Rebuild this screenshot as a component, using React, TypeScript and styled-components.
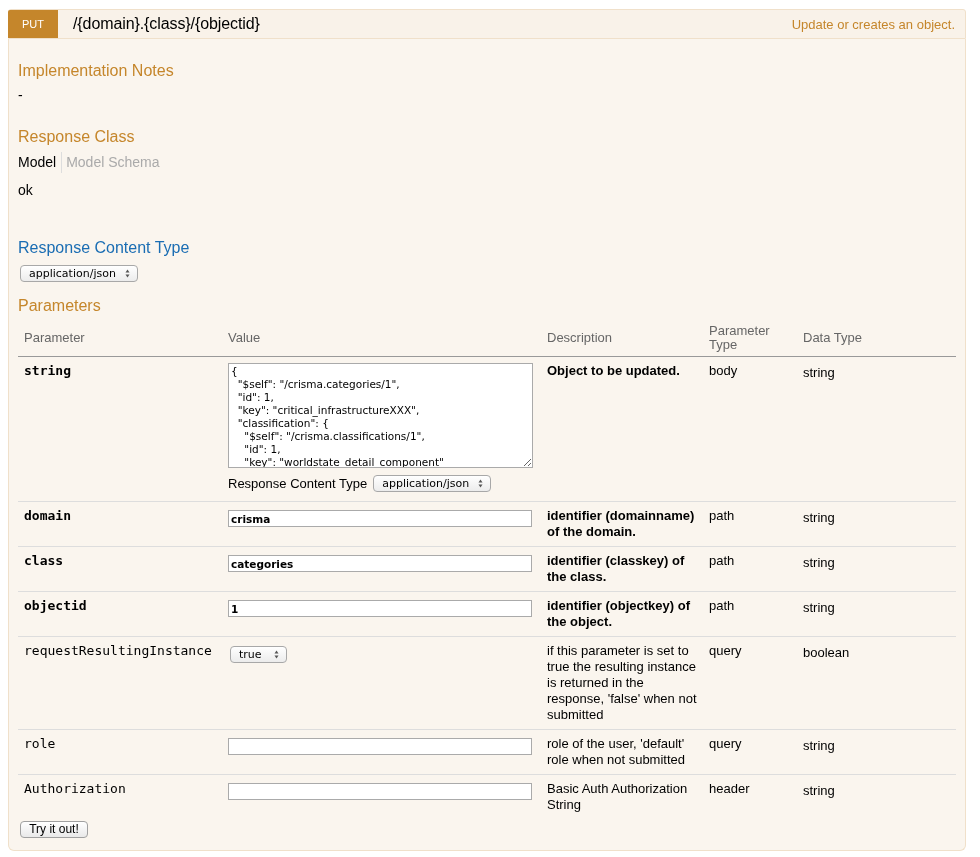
import React from "react";
import styled, { createGlobalStyle } from "styled-components";

const accent = "#c5862b";
const border = "#f0e0ca";

const GlobalStyle = createGlobalStyle`
  html, body {
    margin: 0;
    padding: 0;
    background: #fff;
  }
  body {
    font-family: "Liberation Sans", Arial, sans-serif;
    font-size: 13px;
    color: #000;
  }
`;

const Page = styled.div`
  padding: 9px 0 0 8px;
`;

const Operation = styled.div`
  width: 958px;
`;

const Heading = styled.div`
  display: flex;
  align-items: center;
  height: 28px;
  background: #f9f2e9;
  border: 1px solid ${border};
  border-radius: 3px 3px 0 0;
`;

const MethodBadge = styled.span`
  width: 50px;
  height: 28px;
  margin-left: -1px;
  display: flex;
  align-items: center;
  justify-content: center;
  background: ${accent};
  border-radius: 2px 0 0 0;
  color: #fff;
  font-size: 11px;
  text-transform: uppercase;
`;

const PathText = styled.span`
  margin-left: 15px;
  font-size: 16px;
  letter-spacing: -0.1px;
  flex: 1;
`;

const Summary = styled.span`
  color: ${accent};
  font-size: 13px;
  padding-right: 10px;
`;

const Content = styled.div`
  background: #faf5ee;
  border: 1px solid ${border};
  border-top: none;
  border-radius: 0 0 6px 6px;
  padding: 22px 9px 12px;
`;

const SectionTitle = styled.h4<{ $color?: string; $top?: number }>`
  margin: ${(p) => p.$top ?? 0}px 0 0;
  font-size: 16px;
  line-height: 20px;
  font-weight: normal;
  color: ${(p) => p.$color ?? accent};
`;

const Notes = styled.div`
  margin-top: 6px;
  font-size: 14px;
  line-height: 16px;
`;

const ModelTabs = styled.div`
  display: flex;
  margin-top: 5px;
  font-size: 14px;
  line-height: 21px;
`;

const Tab = styled.span<{ $active?: boolean }>`
  color: ${(p) => (p.$active ? "#000" : "#aaa")};
  padding: ${(p) => (p.$active ? "0 5px 0 0" : "0 0 0 4px")};
  border-right: ${(p) => (p.$active ? "1px solid #ddd" : "none")};
`;

const ModelBody = styled.div`
  margin-top: 9px;
  font-size: 14px;
  line-height: 16px;
`;

const SelectBox = styled.span<{ $width: number; $top?: number; $left?: number }>`
  display: inline-flex;
  align-items: center;
  justify-content: space-between;
  box-sizing: border-box;
  width: ${(p) => p.$width}px;
  height: 17px;
  margin: ${(p) => p.$top ?? 0}px 0 0 ${(p) => p.$left ?? 0}px;
  padding: 0 7px 0 8px;
  border: 1px solid #a8a8a8;
  border-radius: 4px;
  background: linear-gradient(#ffffff, #ececec);
  font-family: "DejaVu Sans", sans-serif;
  font-size: 11px;
  line-height: 15px;
  color: #000;
  vertical-align: middle;
`;

const SelectRow = styled.div<{ $top: number; $left?: number }>`
  margin-top: ${(p) => p.$top}px;
  padding-left: ${(p) => p.$left ?? 0}px;
  display: flex;
  align-items: center;
  height: 17px;
`;

const ParamTable = styled.table`
  width: 938px;
  border-collapse: collapse;
  table-layout: fixed;
`;

const HeadCell = styled.th<{ $width: number; $first?: boolean }>`
  box-sizing: border-box;
  width: ${(p) => p.$width}px;
  padding: 8px 8px 4px ${(p) => (p.$first ? 6 : 0)}px;
  text-align: left;
  vertical-align: middle;
  font-weight: normal;
  font-size: 13px;
  line-height: 14px;
  color: #666;
  border-bottom: 1px solid #999;
`;

const Row = styled.tr`
  & + & > td {
    border-top: 1px solid #ddd;
  }
`;

const Cell = styled.td<{ $first?: boolean; $shift?: number }>`
  box-sizing: border-box;
  padding: ${(p) => 6 + (p.$shift ?? 0)}px 8px 6px ${(p) => (p.$first ? 6 : 0)}px;
  vertical-align: top;
  font-size: 13px;
  line-height: 16px;
`;

const ParamName = styled.span<{ $required?: boolean }>`
  font-family: "DejaVu Sans Mono", monospace;
  font-size: 13px;
  font-weight: ${(p) => (p.$required ? "bold" : "normal")};
`;

const Description = styled.span<{ $required?: boolean }>`
  font-weight: ${(p) => (p.$required ? "bold" : "normal")};
`;

const ValueInput = styled.input<{ $required?: boolean }>`
  display: block;
  box-sizing: border-box;
  width: 304px;
  height: 17px;
  margin: 2px 0 0;
  padding: 0 2px;
  border: 1px solid #aaa;
  background: #fff;
  font-family: "DejaVu Sans", sans-serif;
  font-size: 10.5px;
  font-weight: ${(p) => (p.$required ? "bold" : "normal")};
  color: #000;
  outline: none;
`;

const BodyTextarea = styled.textarea`
  display: block;
  box-sizing: border-box;
  width: 305px;
  height: 105px;
  margin: 0;
  padding: 1px 2px;
  border: 1px solid #aaa;
  background: #fff;
  font-family: "DejaVu Sans", sans-serif;
  font-size: 10.5px;
  line-height: 13px;
  color: #000;
  white-space: pre;
  overflow: auto;
  scrollbar-width: none;
  resize: both;
  outline: none;
`;

const ContentTypeLabel = styled.span`
  font-size: 13px;
  margin-right: 6px;
`;

const CellSpacer = styled.div`
  height: 3px;
`;

const TryButton = styled.button`
  display: block;
  margin: 2px 0 0 2px;
  height: 17px;
  width: 68px;
  padding: 0;
  border: 1px solid #a0a0a0;
  border-radius: 4px;
  background: linear-gradient(#ffffff, #e9e9e9);
  font-family: "Liberation Sans", Arial, sans-serif;
  font-size: 12px;
  line-height: 15px;
  color: #000;
`;

const Arrows = () => (
  <svg width="5" height="9" viewBox="0 0 5 9">
    <path d="M2.5 0.5 L4.5 3.5 L0.5 3.5 Z" fill="#555" />
    <path d="M2.5 8.5 L4.5 5.5 L0.5 5.5 Z" fill="#555" />
  </svg>
);

const bodyValue = `{
  "$self": "/crisma.categories/1",
  "id": 1,
  "key": "critical_infrastructureXXX",
  "classification": {
    "$self": "/crisma.classifications/1",
    "id": 1,
    "key": "worldstate_detail_component"
  },
  "name": "Critical Infrastructure"
}`;

type Param = {
  name: string;
  required: boolean;
  value: "input" | "select";
  defaultValue?: string;
  desc: string;
  kind: string;
  type: string;
};

const params: Param[] = [
  { name: "domain", required: true, value: "input", defaultValue: "crisma", desc: "identifier (domainname) of the domain.", kind: "path", type: "string" },
  { name: "class", required: true, value: "input", defaultValue: "categories", desc: "identifier (classkey) of the class.", kind: "path", type: "string" },
  { name: "objectid", required: true, value: "input", defaultValue: "1", desc: "identifier (objectkey) of the object.", kind: "path", type: "string" },
  { name: "requestResultingInstance", required: false, value: "select", desc: "if this parameter is set to true the resulting instance is returned in the response, 'false' when not submitted", kind: "query", type: "boolean" },
  { name: "role", required: false, value: "input", defaultValue: "", desc: "role of the user, 'default' role when not submitted", kind: "query", type: "string" },
  { name: "Authorization", required: false, value: "input", defaultValue: "", desc: "Basic Auth Authorization String", kind: "header", type: "string" },
];

const App = (): JSX.Element => {
  return (
    <Page>
      <GlobalStyle />
      <Operation>
        <Heading>
          <MethodBadge>put</MethodBadge>
          <PathText>/{"{domain}"}.{"{class}"}/{"{objectid}"}</PathText>
          <Summary>Update or creates an object.</Summary>
        </Heading>
        <Content>
          <SectionTitle>Implementation Notes</SectionTitle>
          <Notes>-</Notes>

          <SectionTitle $top={24}>Response Class</SectionTitle>
          <ModelTabs>
            <Tab $active>Model</Tab>
            <Tab>Model Schema</Tab>
          </ModelTabs>
          <ModelBody>ok</ModelBody>

          <SectionTitle $top={40} $color="#1a6db3">
            Response Content Type
          </SectionTitle>
          <SelectRow $top={7} $left={2}>
            <SelectBox $width={118}>
              application/json <Arrows />
            </SelectBox>
          </SelectRow>

          <SectionTitle $top={14}>Parameters</SectionTitle>
          <ParamTable>
            <thead>
              <tr>
                <HeadCell $width={210} $first>Parameter</HeadCell>
                <HeadCell $width={319}>Value</HeadCell>
                <HeadCell $width={162}>Description</HeadCell>
                <HeadCell $width={94}>Parameter Type</HeadCell>
                <HeadCell $width={153}>Data Type</HeadCell>
              </tr>
            </thead>
            <tbody>
              <Row>
                <Cell $first>
                  <ParamName $required>string</ParamName>
                </Cell>
                <Cell>
                  <BodyTextarea defaultValue={bodyValue} />
                  <SelectRow $top={7}>
                    <ContentTypeLabel>Response Content Type</ContentTypeLabel>
                    <SelectBox $width={118}>
                      application/json <Arrows />
                    </SelectBox>
                  </SelectRow>
                  <CellSpacer />
                </Cell>
                <Cell>
                  <Description $required>Object to be updated.</Description>
                </Cell>
                <Cell>body</Cell>
                <Cell $shift={2}>string</Cell>
              </Row>
              {params.map((p) => (
                <Row key={p.name}>
                  <Cell $first>
                    <ParamName $required={p.required}>{p.name}</ParamName>
                  </Cell>
                  <Cell>
                    {p.value === "input" ? (
                      <ValueInput $required={p.required} defaultValue={p.defaultValue} />
                    ) : (
                      <SelectBox $width={57} $top={3} $left={2}>
                        true <Arrows />
                      </SelectBox>
                    )}
                  </Cell>
                  <Cell>
                    <Description $required={p.required}>{p.desc}</Description>
                  </Cell>
                  <Cell>{p.kind}</Cell>
                  <Cell $shift={2}>{p.type}</Cell>
                </Row>
              ))}
            </tbody>
          </ParamTable>
          <TryButton>Try it out!</TryButton>
        </Content>
      </Operation>
    </Page>
  );
};

export default App;
